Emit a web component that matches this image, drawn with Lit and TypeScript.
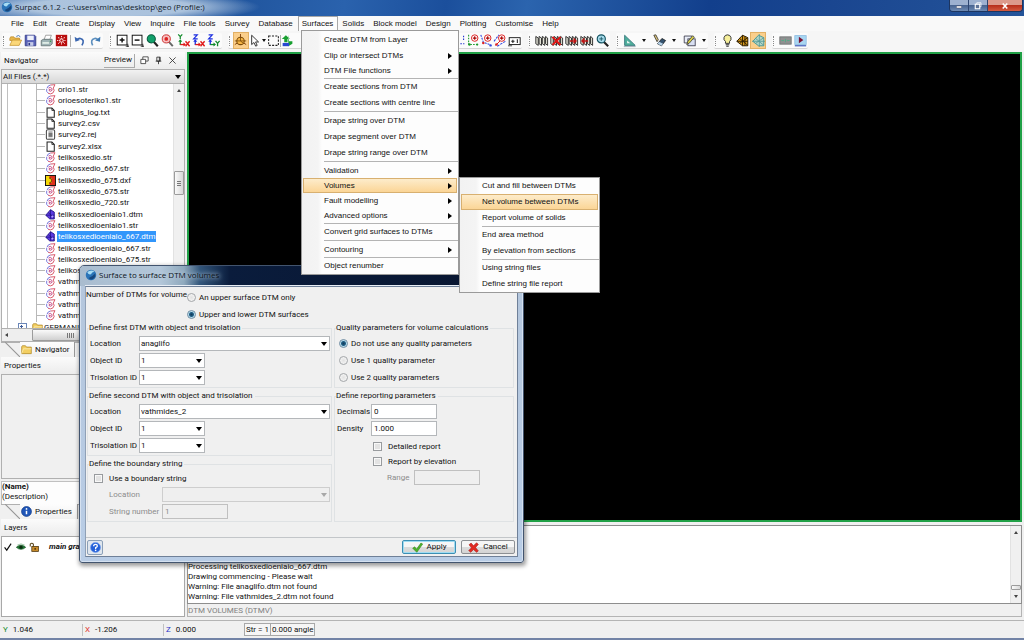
import { LitElement, html, css, svg, nothing } from "lit";
import { customElement, property } from "lit/decorators.js";
import { classMap } from "lit/directives/class-map.js";

const axes = (v: string, vc: string, h: string, hc: string) => svg`
  <g fill="none" stroke-width="1.6"><path d="M4 8V13.5" stroke=${vc}/><path d="M4 13H10" stroke=${hc}/></g>
  <path d="M1.5 9.5L4 6.5L6.5 9.5Z" fill=${vc}/><path d="M8 10.5L11 13L8 15.5Z" fill=${hc}/>
  ${v === "Y"
    ? svg`<path d="M1.5 0.5L4 3.2L6.5 0.5M4 3V6" stroke=${vc} stroke-width="1.5" fill="none"/>`
    : svg`<path d="M2 1H6.5L2 6H7" stroke=${vc} stroke-width="1.5" fill="none"/>`}
  ${h === "X"
    ? svg`<path d="M10.5 9L15.5 15M15.5 9L10.5 15" stroke=${hc} stroke-width="1.7" fill="none"/>`
    : svg`<path d="M10.5 8.5L13 11.5L15.5 8.5M13 11.5V15" stroke=${hc} stroke-width="1.6" fill="none"/>`}`;

const sections = svg`<g fill="#e4e4d8" stroke="#222" stroke-width="1.1">
  <path d="M1 3L4 5V14L1 12Z"/><path d="M5 3L8 5V14L5 12Z"/><path d="M9 3L12 5V14L9 12Z"/><path d="M13 3L15.5 5V14L13 12Z"/></g>`;

const plusPoint = svg`<circle cx="9.5" cy="5" r="4" fill="#fff" stroke="#d22" stroke-width="1.2"/>
  <path d="M9.5 2.8V7.2M7.3 5H11.7" stroke="#a00" stroke-width="1.4"/>`;

const ICONS: Record<string, unknown> = {
  open: svg`<path d="M1 5.5L2 3.5H6L7 5H13V8H1Z" fill="#e6b64c" stroke="#b8821c" stroke-width=".8"/><path d="M1 14L4 7.5H15.5L12.5 14Z" fill="#fbd779" stroke="#c08a20" stroke-width=".8"/><path d="M9 3Q12 .5 14 3.5" fill="none" stroke="#4a77b5" stroke-width="1.2"/>`,
  save: svg`<path d="M1.5 1.5H13L14.5 3V14.5H1.5Z" fill="#5a63b8" stroke="#2e3684"/><rect x="4" y="2" width="8" height="5.5" fill="#eef1fb"/><rect x="4.500" y="10" width="7" height="4.500" fill="#c5cbe8"/><rect x="5.500" y="11" width="2" height="3" fill="#2e3684"/>`,
  print: svg`<path d="M5 7L7 1.500H14L12 7Z" fill="#fff" stroke="#777" stroke-width=".8"/><path d="M1.500 8L4 6.500H15V12L12.500 14.500H1.500Z" fill="#9fb3b6" stroke="#566" stroke-width=".9"/><rect x="3" y="10" width="8" height="2" fill="#e8f4ec"/><circle cx="12.800" cy="9" r=".9" fill="#2a9d3d"/>`,
  burst: svg`<rect x="1" y="1" width="14" height="14" fill="#b80d0d"/><path d="M8 2.500V13.500M2.500 8H13.500M4 4L12 12M12 4L4 12" stroke="#ffd9d9" stroke-width="1.300" stroke-dasharray="1.600 1"/><circle cx="8" cy="8" r="1.800" fill="#b80d0d" stroke="#fff" stroke-width=".8"/>`,
  undo: svg`<path d="M11 14Q15 7 9 5.500Q6.500 5.200 5 7" fill="none" stroke="#3b67b0" stroke-width="2"/><path d="M2 3.500L3 9.500L8.500 7.500Z" fill="#3b67b0"/>`,
  redo: svg`<path d="M4.500 14Q1 7 7 5.500Q9.500 5.200 11 7" fill="none" stroke="#5d8fbe" stroke-width="2"/><path d="M14 3.500L13.500 9.500L7.500 8Z" fill="#3f7bb5"/>`,
  zoomin: svg`<rect x="1.500" y="1.500" width="12" height="12" fill="#fff" stroke="#111" stroke-width="1.200"/><path d="M7.500 4.500V10.500M4.500 7.500H10.500" stroke="#111" stroke-width="1.800"/><path d="M12 15H16M14.500 12V16" stroke="#111" stroke-width="1"/>`,
  zoomout: svg`<rect x="1.500" y="1.500" width="12" height="12" fill="#fff" stroke="#111" stroke-width="1.200"/><path d="M4.500 7.500H10.500" stroke="#111" stroke-width="1.800"/><path d="M12 15H16M14.500 12V16" stroke="#111" stroke-width="1"/>`,
  zoomall: svg`<path d="M9.500 9.500L14.500 15" stroke="#222" stroke-width="2.600"/><circle cx="6.500" cy="6" r="5" fill="#12a06a" stroke="#0c5c40" stroke-width="1.300"/>`,
  zoomsel: svg`<path d="M9.500 9.500L14.500 15" stroke="#666" stroke-width="2.400"/><circle cx="6.500" cy="6" r="5" fill="#f7c2c2" stroke="#c33" stroke-width="1.200"/><circle cx="6.500" cy="6" r="2.300" fill="#d22"/>`,
  yx: axes("Y", "#118a2a", "X", "#e01818"),
  zx: axes("Z", "#1c2ee0", "X", "#e01818"),
  zy: axes("Z", "#1c2ee0", "Y", "#118a2a"),
  orbit: svg`<path d="M8 0V4M1 13L5 10.500M15 13L11 10.500" stroke="#8a4a10" stroke-width="1.200"/><circle cx="8" cy="8.500" r="4.600" fill="#f6b545" stroke="#7a4a08" stroke-width="1.300"/><path d="M1 8.500H15M8 4V8.500L11.500 11.500" fill="none" stroke="#7a4a08" stroke-width="1"/>`,
  cursor: svg`<path d="M4.500 1.500V13L7.300 10.500L9.500 15L11.300 14L9.300 9.800H13Z" fill="#fff" stroke="#222" stroke-width="1.100"/>`,
  marquee: svg`<rect x="2" y="2.500" width="12" height="11.500" fill="none" stroke="#222" stroke-width="1.300" stroke-dasharray="2.500 1.600"/>`,
  shift: svg`<path d="M9 1V15L14 12V9H10ZM1 6L6 1.500L11 6H8V10H4V6Z" fill="#18a030"/><path d="M2 11H10V15H2Z" fill="#2848d0"/>`,
  dashes: svg`<path d="M13 2V8M9 12H14" stroke="#2a3bd0" stroke-width="1.400" stroke-dasharray="2 1.400"/>`,
  pt1: svg`<path d="M2 1V13H14" fill="none" stroke="#1c9a2c" stroke-width="1.300" stroke-dasharray="2 1.500"/>${plusPoint}<circle cx="3" cy="13" r="1.500" fill="#1c9a2c"/><circle cx="12.500" cy="13" r="1.400" fill="#1c9a2c"/>`,
  pt2: svg`<path d="M1 1L4 10L13 13.500" fill="none" stroke="#2f46e0" stroke-width="1.300" stroke-dasharray="2.500 1.300"/>${plusPoint}<circle cx="4" cy="11" r="1.500" fill="#d22"/><circle cx="13" cy="14" r="1.500" fill="#2f46e0"/>`,
  pt3: svg`<path d="M0 9L6 1M4 15L14 9" fill="none" stroke="#2f46e0" stroke-width="1.300" stroke-dasharray="3 1.300"/><path d="M2 14L9 7" stroke="#d22" stroke-width="1.200"/>${plusPoint}<circle cx="3" cy="13" r="1.600" fill="#d22"/>`,
  label: svg`<rect x="1.500" y="4.500" width="13.500" height="8.500" fill="#fff" stroke="#222" stroke-width="1.200"/><path d="M4 9H8M6 7V11M11.500 6.500V11" stroke="#222" stroke-width="1.300"/><path d="M0 14.500H5" stroke="#222"/>`,
  sec: sections,
  secx: svg`${sections}<path d="M3 3.500L13 13.500M13 3.500L3 13.500" stroke="#e01414" stroke-width="2.400"/>`,
  secr: svg`${sections}<path d="M6 8.500H13M10.500 5.500L13.500 8.500L10.500 11.500" stroke="#c01414" stroke-width="1.800" fill="none"/>`,
  secl: svg`${sections}<path d="M10 8.500H3M5.500 5.500L2.500 8.500L5.500 11.500" stroke="#c01414" stroke-width="1.800" fill="none"/>`,
  lens: svg`<path d="M9.500 9.500L15 15" stroke="#222" stroke-width="2.600"/><circle cx="6.500" cy="6" r="5" fill="#a8dcec" stroke="#12505e" stroke-width="1.400"/><path d="M4 6H9M6.500 3.500V8.500" stroke="#12505e"/>`,
  ruler: svg`<path d="M2 1.500V14H15Z" fill="#4fae9c" stroke="#2a6f74" stroke-width="1"/><path d="M5 8V11.500H9Z" fill="#e9f5f2"/><path d="M1 15.500H15.500" stroke="#789" stroke-width=".8"/>`,
  erase: svg`<path d="M1 1.500L3.500 1L6.500 7L5 9.500Z" fill="#d9c27a" stroke="#222" stroke-width=".9"/><path d="M5.500 12L11 5.500L15.500 8L10.500 14.500Z" fill="#34526e" stroke="#111" stroke-width=".9"/><path d="M5.500 12L7.500 9.600L12.500 12L10.500 14.500Z" fill="#b6d2e8"/>`,
  edit: svg`<path d="M1.500 2.500H11V11H1.500Z" fill="#e9edf7" stroke="#334" /><rect x="6" y="6" width="9" height="8.500" fill="#d8dff2" stroke="#334"/><path d="M4.500 13L6 9L12 2L14 4L8 11Z" fill="#d8cf4c" stroke="#333" stroke-width=".9"/>`,
  bulb: svg`<path d="M8 1A4.500 4.500 0 0 1 10.500 9.200V11.500H5.500V9.200A4.500 4.500 0 0 1 8 1Z" fill="#f6ef9a" stroke="#333" stroke-width="1.200"/><path d="M5.800 13.200H10.200M6.500 15H9.500" stroke="#333" stroke-width="1.300"/>`,
  mesh: svg`<path d="M8 1.500L14.500 4.500V14.500H8L1 9Z" fill="#d79a1c" stroke="#2b1c00" stroke-width="1.200"/><path d="M1 9H14.500M8 1.500V14.500M4.500 5.500L14.500 14M14.500 4.500L4.500 11.500M11 3V14.500" stroke="#2b1c00" stroke-width="1.100" fill="none"/>`,
  mesh2: svg`<path d="M8 1.500L14.500 4.500V14.500H8L1 9Z" fill="#b4d6c6" stroke="#4a9a98" stroke-width="1.200"/><path d="M0 9H16M9 0V16M4.500 5.500L14.500 14M14.500 4.500L4.500 11.500" stroke="#559a98" stroke-width="1" fill="none"/>`,
  plate: svg`<rect x="1" y="3.500" width="14" height="9" fill="#8f9191" stroke="#6e7070"/><path d="M3 8H6M8 6V10M10 8H13" stroke="#5a8" stroke-width="1.200"/>`,
  play: svg`<rect x="1" y="2" width="14" height="11" fill="#a9d6f2" stroke="#8bbbe0"/><path d="M6 3.500L11.500 7.500L6 11.500Z" fill="#7a1030"/><path d="M1 14.500H15" stroke="#3455b8" stroke-width="1.400"/>`,
  str: svg`<path d="M5 13.500Q1 11 2.500 7M3 6Q4 2 8 1.500" fill="none" stroke="#6a6ad8" stroke-width="1.300"/><path d="M8 1.500L14.500 1L12 6Q15 9 11.500 13Q8 15.500 4.500 13.500" fill="none" stroke="#d5485c" stroke-width="1.300"/><path d="M5 6Q8 3.500 10 6.500Q11.500 10 8 10.500Q5.500 10.500 6 8.200Q8 7 8.500 8.500" fill="none" stroke="#c0407c" stroke-width="1.300"/>`,
  file: svg`<path d="M3 1.500H10L13.500 5V15H3Z" fill="#fff" stroke="#222" stroke-width="1.500"/><path d="M10 1.500V5H13.500" fill="none" stroke="#222" stroke-width="1.200"/>`,
  rej: svg`<rect x="2" y="1" width="12" height="14" rx="2" fill="#fff" stroke="#444" stroke-width="1.500"/><rect x="5" y="5" width="6" height="6.500" fill="#777"/><path d="M5 3.500H11M5 13.200H11" stroke="#999"/>`,
  dxf: svg`<rect x=".7" y=".7" width="14.600" height="14.600" fill="#f5d90a" stroke="#111" stroke-width="1.400"/><path d="M6.500 1.400H14.600V14.600H6.500V11.500H10V4.500H6.500Z" fill="#e0301c"/><path d="M6 4.500H8.500Q10.500 8 8.500 11.500H6" fill="none" stroke="#5a1008" stroke-width="1.300"/>`,
  dtm: svg`<path d="M8 1L13.500 4.500V14.500H7L1 9Z" fill="#5b3ae0" stroke="#1d0f80" stroke-width="1.200"/><path d="M1 9H13.500M8 1V14M4.500 5L13.500 13" stroke="#1d0f80" fill="none"/><circle cx="10.800" cy="11" r="1.500" fill="#b9a4ff"/>`,
  folder: svg`<path d="M1 4L2 2.500H6.500L8 4.500H15V14H1Z" fill="#f3cf62" stroke="#a9801c"/><path d="M1 14L3.500 7H15" fill="none" stroke="#fff3c2"/>`,
  globe: svg`<circle cx="8" cy="8" r="7" fill="#2b74b8"/><path d="M3 4Q8 0 12.500 3.500Q9 4 8 7Q4 8 3 4Z" fill="#a6dcf4"/><path d="M5 12Q10 10 13.500 6Q15 12 9 14Q6.500 14 5 12Z" fill="#17477e"/>`,
  info: svg`<circle cx="8" cy="8" r="7.200" fill="#1f56b8" stroke="#123a85"/><path d="M8 7V12" stroke="#fff" stroke-width="2.200"/><circle cx="8" cy="4.300" r="1.300" fill="#fff"/>`,
  check: svg`<path d="M2.500 8.500L6 13L13 2.500" fill="none" stroke="#111" stroke-width="1.900"/>`,
  eye: svg`<path d="M.5 8.500Q8 1.500 15.500 8.500Q8 15 .5 8.500Z" fill="#1f7a34" stroke="#0e4a1c"/><circle cx="8" cy="8.300" r="2.600" fill="#0a2c10"/><path d="M2 5Q8 1 14 5" stroke="#6ba878" fill="none"/>`,
  lock: svg`<path d="M2 7V3.500Q4.500 .5 7 3.500V7" fill="none" stroke="#5c4a20" stroke-width="1.700"/><rect x="4.500" y="7" width="10.500" height="8" fill="#c68a2a" stroke="#4a3208" stroke-width="1.200"/><path d="M9.800 9.500V12.500" stroke="#2a1a00" stroke-width="1.800"/>`,
  tick: svg`<path d="M1 9L4 7L6.500 10.500L13 1.500L15.500 3L7 15Z" fill="#4cb52c" stroke="#2b7d14" stroke-width=".8"/>`,
  cross: svg`<path d="M1.500 4L4.500 1.500L8 5.500L12.500 1L15 3.500L11 8L15 13L12.500 15L8 11L4 15L1 12.500L5 8.500Z" fill="#e22a22" stroke="#a31410" stroke-width=".8"/>`,
  help: svg`<circle cx="8" cy="8" r="7.300" fill="#2460d8" stroke="#7aa4ee" stroke-width="1"/><path d="M5.300 6.200Q5.300 3.500 8 3.500Q10.700 3.500 10.700 5.800Q10.700 7.300 8.200 8.300V10" fill="none" stroke="#fff" stroke-width="1.900"/><circle cx="8.200" cy="12.200" r="1.200" fill="#fff"/>`,
  float: svg`<path d="M5 1.500H14.500V9H5Z" fill="#fff" stroke="#222" stroke-width="1.300"/><path d="M1.500 6H10V13.500H1.500Z" fill="#fff" stroke="#222" stroke-width="1.300"/>`,
  pin: svg`<path d="M5 2H11V9H5ZM3 9.200H13M8 9V14.500M9.500 2V9" fill="none" stroke="#222" stroke-width="1.400"/>`,
  close: svg`<path d="M2.500 2.500L13.500 13.500M13.500 2.500L2.500 13.500" stroke="#333" stroke-width="1.500"/>`,
  min: svg`<rect x="3" y="8" width="10" height="4" rx="1" fill="#fff" stroke="#445" stroke-width=".8"/>`,
  max: svg`<path d="M5.500 1.500H14V9.500H5.500Z" fill="none" stroke="#fff" stroke-width="1.500"/><rect x="2.500" y="4.500" width="9" height="9" fill="#5d7398" stroke="#fff" stroke-width="2.200"/>`,
  wclose: svg`<path d="M3.500 3L12.500 13M12.500 3L3.500 13" stroke="#fff" stroke-width="3.200"/>`,
};

const icon = (name: string) =>
  html`<svg class="i" viewBox="0 0 16 16" aria-hidden="true">${ICONS[name]}</svg>`;

const base = css`
  * { box-sizing: border-box; }
  button, input, select, fieldset, legend, ul, p, h1, h2 { margin: 0; padding: 0; font: inherit; color: inherit; }
  button { background: none; border: 0; white-space: nowrap; }
  ul { list-style: none; }
  a { color: inherit; text-decoration: none; }
  .i { width: 12px; height: 12px; display: block; flex: none; overflow: visible; }
`;

type Item = { label: string; sub?: boolean; hot?: boolean } | null;

@customElement("popup-menu")
class PopupMenu extends LitElement {
  @property({ attribute: false }) items: Item[] = [];
  static styles = [base, css`
    :host { display: block; background: linear-gradient(90deg, #f2f2f2 0, #f4f4f4 16px, #fdfdfd 20px); border: 1px solid #9a9a9a; font: 8px/16px "Liberation Sans", Arial, sans-serif; color: #111; }
    button { display: flex; align-items: center; width: calc(100% - 2px); height: 16px; margin: 0 1px; padding: 0 4px 0 20px; border: 1px solid transparent; text-align: left; }
    button.sub { height: 15px; }
    span { flex: 1; }
    button.hot { background: linear-gradient(#fdeccb, #fbd596); border-color: #d8b070; }
    button.sub::after { content: ""; border: 3px solid transparent; border-left: 4px solid #000; border-right: 0; }
    hr { height: 1px; margin: 0 0 0 22px; border: 0; background: #b4b4b4; }
    hr.wide { margin-bottom: 1px; }
  `];
  render() {
    return html`${this.items.map((it, n) => it
      ? html`<button role="menuitem" class=${classMap({ sub: !!it.sub, hot: !!it.hot })}><span>${it.label}</span></button>`
      : html`<hr class=${classMap({ wide: this.hasAttribute("roomy") && !this.items[n - 1]?.sub })}>`)}`;
  }
}

@customElement("volumes-dialog")
class VolumesDialog extends LitElement {
  static styles = [base, css`
    :host { display: flex; flex-direction: column; padding: 0 5px 5px; border: 1px solid #42546e; border-radius: 5px 5px 3px 3px; background: linear-gradient(#b4c6dc, #b9cde6); box-shadow: 0 0 0 1px #d5e1f0 inset, 1px 2px 4px 1px rgba(0,0,0,.4); font: 8px/12px Roboto, sans-serif; color: #111; }
    header { margin: 0 -5px; height: 20px; padding: 0 5px 2px; display: flex; align-items: center; gap: 2px; border-radius: 4px 4px 0 0; background: linear-gradient(90deg, #a9bccf 0, #b5c8da 80px, #8fa9bd 104px, #32557a 120px, #0a1c3c 150px, #08152f 100%); }
    header h2 { font: 8px/12px "Open Sans", sans-serif; color: #0c1420; text-shadow: 0 0 4px #c9d8e8, 0 0 6px #a9bccf; }
    .body { flex: 1; background: #f0f0f0; border: 1px solid #6f8098; border-left-color: #8fa0b6; display: flex; flex-direction: column; box-shadow: 0 -1px 0 #e8eef6; }
    .top { display: flex; gap: 6px; height: 35px; }
    .top > span { width: 94px; padding-top: 2px; white-space: nowrap; }
    .choices { padding-top: 2px; }
    .cols { display: grid; grid-template-columns: 245px 1fr; gap: 2px; padding: 0 3px 0 1px; }
    .col { display: flex; flex-direction: column; gap: 2px; }
    fieldset { border: 1px solid #dfe2e4; padding: 1px; min-width: 0; }
    .grow { flex: 1; }
    legend { line-height: 12px; padding: 0 2px 0 0; }
    .row { display: flex; align-items: center; height: 17px; padding-left: 1px; }
    .row.tick { height: 15px; }
    .row.first { margin-top: 2px; }
    .col .row.rad { padding-left: 3px; }
    .k { width: 49px; flex: none; }
    .k.in { width: 72px; padding-left: 19px; }
    .k.s { width: 34px; }
    .k.r { width: 77px; padding-left: 50px; }
    .off { color: #8c8c8c; }
    .box { width: 66px; height: 15px; flex: none; border: 1px solid #b4b7ba; background: #fff; padding: 0 1px; appearance: none; border-radius: 0; }
    input.box { padding: 0 2px; }
    .off .box { background: #efefef; border-color: #c0c0c0; }
    .pick { position: relative; display: flex; }
    .pick.w { flex: 1; }
    .pick.w .box { width: 100%; }
    .pick::after { content: ""; position: absolute; right: 3px; top: 6px; border: 3px solid transparent; border-top: 4px solid #000; border-bottom: 0; pointer-events: none; }
    .off .pick::after { border-top-color: #a8a8a8; }
    input[type="radio"] { appearance: none; width: 9px; height: 9px; flex: none; border: 1px solid #a3a6a9; border-radius: 50%; background: radial-gradient(#e2e2e2, #fafafa); }
    input[type="radio"]:checked { border-color: #6f8da3; background: radial-gradient(circle, #143a58 0, #1f5f86 2px, #b8dcec 3px, #e8f4fa 5px); }
    input[type="checkbox"] { appearance: none; width: 9px; height: 9px; flex: none; border: 1px solid #989b9e; background: #e3e3e3; box-shadow: 0 0 0 1px #f8f8f8 inset; }
    label.opt { display: flex; align-items: center; gap: 3px; }
    label.chk { display: flex; align-items: center; gap: 6px; padding-left: 4px; }
    .wide { padding-left: 33px; }
    footer { margin-top: auto; height: 19px; border-top: 1px solid #c3c6c9; display: flex; align-items: center; gap: 5px; padding: 0 2px 0 1px; }
    footer button { height: 14px; width: 54px; display: flex; align-items: center; justify-content: center; gap: 4px; border: 1px solid #8d9094; border-radius: 2px; background: linear-gradient(#f6f6f6 50%, #dcdcdc 50%, #d4d4d4); }
    footer .i { width: 11px; height: 11px; }
    footer .help { width: 16px; height: 15px; margin-right: auto; border-color: #8ba0b8; background: #dfe6ee; }
    footer .ok { border-color: #3c8fb4; box-shadow: 0 0 0 1px #9fdcf2 inset; }
  `];

  private pick(id: string, value: string, cls = "", disabled = false) {
    return html`<span class="pick ${cls}"><select class="box" id=${id} ?disabled=${disabled}><option>${value}</option></select></span>`;
  }
  private surface(legend: string, key: string, value: string) {
    return html`<fieldset><legend>${legend}</legend>
      <div class="row"><label class="k" for="${key}-loc">Location</label>${this.pick(`${key}-loc`, value, "w")}</div>
      <div class="row"><label class="k" for="${key}-obj">Object ID</label>${this.pick(`${key}-obj`, "1")}</div>
      <div class="row"><label class="k" for="${key}-tri">Trisolation ID</label>${this.pick(`${key}-tri`, "1")}</div>
    </fieldset>`;
  }
  private radio(name: string, label: string, on = false) {
    return html`<div class="row rad"><label class="opt"><input type="radio" name=${name} ?checked=${on}>${label}</label></div>`;
  }
  render() {
    return html`
      <header>${icon("globe")}<h2>Surface to surface DTM volumes</h2></header>
      <div class="body">
        <div class="top"><span>Number of DTMs for volume</span>
          <div class="choices">${this.radio("n", "An upper surface DTM only")}${this.radio("n", "Upper and lower DTM surfaces", true)}</div>
        </div>
        <div class="cols">
          <div class="col">
            ${this.surface("Define first DTM with object and trisolation", "a", "anaglifo")}
            ${this.surface("Define second DTM with object and trisolation", "b", "vathmides_2")}
            <fieldset><legend>Define the boundary string</legend>
              <div class="row tick"><label class="chk"><input type="checkbox">Use a boundary string</label></div>
              <div class="row off"><label class="k in" for="s-loc">Location</label>${this.pick("s-loc", "", "w", true)}</div>
              <div class="row off"><label class="k in" for="s-num">String number</label><input class="box" id="s-num" value="1" disabled></div>
            </fieldset>
          </div>
          <div class="col">
            <fieldset><legend>Quality parameters for volume calculations</legend>
              ${this.radio("q", "Do not use any quality parameters", true)}
              ${this.radio("q", "Use 1 quality parameter")}
              ${this.radio("q", "Use 2 quality parameters")}
            </fieldset>
            <fieldset class="grow"><legend>Define reporting parameters</legend>
              <div class="row"><label class="k s" for="dec">Decimals</label><input class="box" id="dec" value="0"></div>
              <div class="row"><label class="k s" for="den">Density</label><input class="box" id="den" value="1.000"></div>
              <div class="row tick first wide"><label class="chk"><input type="checkbox">Detailed report</label></div>
              <div class="row tick wide"><label class="chk"><input type="checkbox">Report by elevation</label></div>
              <div class="row off"><label class="k r" for="rng">Range</label><input class="box" id="rng" disabled></div>
            </fieldset>
          </div>
        </div>
        <footer>
          <button class="help" aria-label="Help">${icon("help")}</button>
          <button class="ok">${icon("tick")}Apply</button>
          <button>${icon("cross")}Cancel</button>
        </footer>
      </div>`;
  }
}

const MENUS = ["File", "Edit", "Create", "Display", "View", "Inquire", "File tools", "Survey", "Database", "Surfaces", "Solids", "Block model", "Design", "Plotting", "Customise", "Help"];

const TOOLS: [string, string[]][] = [
  ["g1", ["open", "save", "print", "burst", "|", "undo", "redo"]],
  ["g2", ["zoomin", "zoomout", "zoomall", "zoomsel", "yx", "zx", "zy"]],
  ["g3", ["*orbit", "cursor", "v", "marquee", "|", "shift", "_", "dashes", "pt1", "pt2", "pt3", "label"]],
  ["g4", ["sec", "secx", "secr", "secl", "lens"]],
  ["g5", ["ruler", "v", "erase", "v", "edit", "v"]],
  ["g6", ["bulb", "mesh", "*mesh2"]],
  ["g7", ["plate", "play"]],
];

const FILES: [string, string][] = [
  ["str", "orio1.str"], ["str", "orioesoteriko1.str"], ["file", "plugins_log.txt"], ["file", "survey2.csv"],
  ["rej", "survey2.rej"], ["file", "survey2.xlsx"], ["str", "telikosxedio.str"], ["str", "telikosxedio_667.str"],
  ["dxf", "telikosxedio_675.dxf"], ["str", "telikosxedio_675.str"], ["str", "telikosxedio_720.str"],
  ["dtm", "telikosxedioeniaio1.dtm"], ["str", "telikosxedioeniaio1.str"], ["dtm", "telikosxedioeniaio_667.dtm"],
  ["str", "telikosxedioeniaio_667.str"], ["str", "telikosxedioeniaio_675.str"], ["str", "telikosxedioeniaio_720.str"],
  ["str", "vathmides.str"], ["str", "vathmides_1.str"], ["str", "vathmides_2.str"], ["str", "vathmides_3.str"],
];
const SELECTED = "telikosxedioeniaio_667.dtm";

const SURFACES: Item[] = [
  { label: "Create DTM from Layer" }, { label: "Clip or intersect DTMs", sub: true }, { label: "DTM File functions", sub: true }, null,
  { label: "Create sections from DTM" }, { label: "Create sections with centre line" }, null,
  { label: "Drape string over DTM" }, { label: "Drape segment over DTM" }, { label: "Drape string range over DTM" }, null,
  { label: "Validation", sub: true }, { label: "Volumes", sub: true, hot: true }, { label: "Fault modelling", sub: true }, { label: "Advanced options", sub: true }, null,
  { label: "Convert grid surfaces to DTMs" }, null, { label: "Contouring", sub: true }, null, { label: "Object renumber" },
];
const VOLUMES: Item[] = [
  { label: "Cut and fill between DTMs" }, { label: "Net volume between DTMs", hot: true }, { label: "Report volume of solids" }, null,
  { label: "End area method" }, { label: "By elevation from sections" }, null, { label: "Using string files" }, { label: "Define string file report" },
];

@customElement("app-root")
class AppRoot extends LitElement {
  static styles = [base, css`
    :host { position: relative; display: flex; flex-direction: column; height: 100vh; overflow: hidden; background: #f0f0f0; font: 8px/12px Roboto, sans-serif; color: #111; }
    .title { height: 16px; flex: none; display: flex; align-items: flex-start; gap: 2px; padding-left: 1px; background: radial-gradient(ellipse 150px 16px at 110px 7px, rgba(178,200,224,.95) 55%, rgba(178,200,224,0) 100%), linear-gradient(100deg, #4b78b4 0, #21569f 240px, #2a62ad 340px, #1b4f9c 440px, #2b64ae 520px, #123f8c 700px, #1a4690 820px, #24549a 100%); }
    .title h1 { flex: 1; font: 8px/14px "Open Sans", sans-serif; color: #111a28; }
    .title > .i { margin-top: 1px; }
    .wb { display: flex; height: 12px; margin-right: 1px; border: 1px solid #1c3560; border-top: 0; border-radius: 0 0 4px 4px; overflow: hidden; }
    .wb button { width: 19px; display: grid; place-items: center; background: linear-gradient(#9db1d0 45%, #496591 50%, #6d8ab4); border-right: 1px solid #2c4570; }
    .wb button:last-child { width: 34px; border: 0; background: linear-gradient(#dc9a8c 45%, #b8301c 50%, #d25a40); }
    .wb .i { width: 8px; height: 8px; }
    .menus { height: 15px; flex: none; display: flex; padding-left: 7px; background: #f9f9f9; font: 8px/14px "Liberation Sans", Arial, sans-serif; }
    .menus button { padding: 0 4px 0 3px; border: 1px solid transparent; border-bottom: 0; }
    .menus button.open { background: #fdfdfd; border-color: #a8a8a8; }
    .tools { height: 21px; flex: none; display: flex; gap: 6px; padding: 2px 0 3px 2px; background: #f6f6f6; }
    .tg { display: flex; align-items: center; justify-content: space-between; padding: 0 1px 0 6px; background: #fbfbfb; border-bottom: 1px solid #d5d5d5; border-radius: 2px; position: relative; }
    .tg::before { content: ""; position: absolute; left: 1px; top: 3px; bottom: 2px; border-left: 1px dotted #8a8a8a; }
    .g1 { width: 101px; } .g2 { width: 113px; } .g3 { width: 294px; } .g4 { width: 82px; } .g5 { width: 92px; } .g6 { width: 52px; } .g7 { width: 36px; }
    .tb { width: 14px; height: 15px; display: grid; place-items: center; }
    .tb .i { width: 13px; height: 13px; }
    .tb.on { background: #fbcf8b; outline: 1px solid #e2b064; }
    .bar { width: 1px; height: 12px; background: #b0b0b0; }
    .drop { width: 5px; height: 8px; display: grid; place-items: center; }
    .drop::after { content: ""; border: 2px solid transparent; border-top: 3px solid #111; border-bottom: 0; }
    .gap { flex: 0 0 158px; }
    .main { flex: 1; min-height: 0; display: grid; grid-template-columns: 184px 1fr; gap: 2px; padding: 0 2px 3px 1px; }
    .left { display: grid; grid-template-rows: 306fr 162fr 98fr; min-height: 0; }
    .left section { display: flex; flex-direction: column; min-height: 0; }
    .head { height: 17px; flex: none; display: flex; align-items: center; gap: 5px; padding: 0 8px 0 3px; background: linear-gradient(#fbfbfb, #ececec); }
    .head h2 { flex: 1; font-weight: 400; }
    .head .i { width: 9px; height: 9px; }
    .head .pv { border-right: 1px solid #aaa; border-bottom: 1px solid #aaa; padding: 0 2px 1px 0; }
    .filter { position: relative; flex: none; display: flex; }
    .filter select { appearance: none; width: 100%; height: 15px; border: 1px solid #b0b0b0; border-radius: 0; background: linear-gradient(#f2f2f2, #d8d8d8); padding: 0 1px; }
    .filter::after { content: ""; position: absolute; right: 4px; top: 6px; border: 3px solid transparent; border-top: 4px solid #000; border-bottom: 0; }
    .tree { flex: 1; min-height: 0; display: flex; background: #fff; border: 1px solid #b0b0b0; border-width: 0 1px; overflow: hidden; }
    .list { flex: 1; height: calc(100% + 5px); display: flex; flex-direction: column; background: linear-gradient(#c0c0c0, #c0c0c0) 5px 0 / 1px 100% no-repeat, linear-gradient(#c0c0c0, #c0c0c0) 19px 0 / 1px 100% no-repeat; }
    .list li { flex: 1; display: flex; align-items: center; margin-left: 34px; border-left: 1px solid #b8b8b8; white-space: nowrap; }
    .list li::before { content: ""; width: 8px; border-top: 1px solid #b8b8b8; }
    .list li.dir { margin-left: 16px; border: 0; }
    .list li.dir::before { width: 7px; height: 7px; border: 1px solid #6a86b8; background: linear-gradient(#3a5a98, #3a5a98) 1px 2px / 3px 1px no-repeat, linear-gradient(#3a5a98, #3a5a98) 2px 1px / 1px 3px no-repeat #fff; }
    .list .dir .i { margin: 0 1px 0 5px; }
    .list .i { width: 11px; height: 11px; }
    .list a { margin-left: 1px; padding: 0 1px; line-height: 11px; }
    .list a.sel { background: #3296fb; color: #fff; }
    .vs { width: 11px; flex: none; background: #f0f0f0; display: flex; flex-direction: column; align-items: center; border-left: 1px solid #e2e2e2; }
    .up, .dn { flex: none; height: 12px; display: grid; place-items: center; }
    .up::after { content: ""; border: 2px solid transparent; border-bottom: 3px solid #444; border-top: 0; }
    .dn::after { content: ""; border: 2px solid transparent; border-top: 3px solid #444; border-bottom: 0; }
    .th { width: 10px; border: 1px solid #9c9c9c; border-radius: 1px; background: linear-gradient(90deg, #fafafa, #d8d8d8); display: grid; place-items: center; }
    .th::after { content: ""; width: 4px; height: 5px; background: repeating-linear-gradient(#777 0 1px, transparent 1px 2px); }
    .vs.nav::before { content: ""; order: 1; flex: 1; max-height: 75px; }
    .vs.nav .th { order: 2; height: 24px; }
    .hs { height: 14px; flex: none; display: flex; align-items: center; background: #eee; border: 1px solid #b0b0b0; padding-left: 3px; }
    .hs::before { content: ""; border: 2px solid transparent; border-right: 3px solid #444; border-left: 0; }
    .hs .th { margin-left: 24px; width: 76px; height: 12px; background: linear-gradient(#fafafa, #d0d0d0); }
    .hs .th::after { width: 7px; background: repeating-linear-gradient(90deg, #777 0 1px, transparent 1px 2px); }
    .tabs { height: 15px; flex: none; display: flex; padding-left: 4px; background: linear-gradient(#b0b0b0 0 1px, #f0f0f0 1px); }
    .tab { display: flex; align-items: center; gap: 3px; padding: 0 5px 0 16px; background: linear-gradient(to bottom left, transparent calc(50% - 1px), #999 50%, transparent calc(50% + 1px)) 0 0 / 15px 100% no-repeat, linear-gradient(#fdfdfd, #f0f0f0) 15px 0 no-repeat; border-right: 1px solid #999; }
    .tab .i { width: 11px; height: 11px; }
    .well { flex: 1; border: 1px solid #b0b0b0; background: #f0f0f0; margin-bottom: 2px; }
    .desc { flex: none; background: #fdfdfd; border: 1px solid #c0c0c0; border-bottom: 0; line-height: 10px; padding: 0 0 2px; }
    .layers { flex: 1; background: #fff; border: 1px solid #a8a8a8; padding: 4px 1px; }
    .lay { display: flex; align-items: center; gap: 3px; }
    .lay .i { width: 10px; height: 10px; }
    .lay b { margin-left: 7px; font-style: italic; white-space: nowrap; }
    .right { display: flex; flex-direction: column; min-width: 0; min-height: 0; }
    .view { flex: 1; background: #000; border: 2px solid #20a046; }
    .log { height: 79px; flex: none; margin-top: 3px; display: flex; border: 1px solid #8e8e8e; background: #fff; line-height: 10px; }
    .log div { flex: 1; align-self: flex-end; padding-bottom: 1px; }
    .log .vs { flex: none; align-self: stretch; width: 11px; }
    .log .vs i { flex: 1; }
    .log .th { height: 5px; } .log .th::after { display: none; }
    .cmd { height: 13px; flex: none; border: 1px solid #b4b4b4; border-top: 0; background: #f0f0f0; }
    .cmd::placeholder { color: #808080; opacity: 1; }
    .status { height: 20px; flex: none; display: flex; align-items: center; padding-left: 3px; background: #f0f0f0; border-top: 1px solid #b4b4b4; border-bottom: 2px solid #7283a6; }
    .st { width: 81px; display: flex; gap: 5px; }
    .st:first-child { width: 79px; }
    .st + .st { border-left: 1px solid #c0c0c0; padding-left: 2px; }
    .y { color: #1a8a2a; } .x { color: #e03030; } .z { color: #2a32c8; }
    .cell { border: 1px solid #a8a8a8; padding: 0 1px; background: #f6f6f6; line-height: 11px; }
    .cell + .cell { border-left: 0; }
    .menu1, .menu2, .dlg { position: absolute; }
    .menu1 { left: 301px; top: 30px; width: 158px; padding-top: 1px; }
    .menu2 { left: 459px; top: 177px; width: 141px; }
    .dlg { left: 79px; top: 265px; width: 445px; height: 298px; }
  `];

  private tool(t: string) {
    if (t === "|") return html`<span class="bar"></span>`;
    if (t === "_") return html`<span class="gap"></span>`;
    if (t === "v") return html`<button class="drop" aria-label="More"></button>`;
    const on = t[0] === "*";
    const name = on ? t.slice(1) : t;
    return html`<button class=${classMap({ tb: true, on })} aria-label=${name}>${icon(name)}</button>`;
  }

  render() {
    return html`
      <header class="title">${icon("globe")}<h1>Surpac 6.1.2 - c:\\users\\minas\\desktop\\geo (Profile:)</h1>
        <div class="wb"><button aria-label="Minimise">${icon("min")}</button><button aria-label="Restore">${icon("max")}</button><button aria-label="Close">${icon("wclose")}</button></div>
      </header>
      <nav class="menus">${MENUS.map((m) => html`<button class=${m === "Surfaces" ? "open" : nothing}>${m}</button>`)}</nav>
      <div class="tools">${TOOLS.map(([g, ts]) => html`<div class="tg ${g}">${ts.map((t) => this.tool(t))}</div>`)}</div>
      <div class="main">
        <aside class="left">
          <section>
            <div class="head"><h2>Navigator</h2><button class="pv">Preview</button><button aria-label="Float">${icon("float")}</button><button aria-label="Pin">${icon("pin")}</button><button aria-label="Close">${icon("close")}</button></div>
            <div class="filter"><select aria-label="File filter"><option>All Files (.*.*)</option></select></div>
            <div class="tree">
              <ul class="list">
                ${FILES.map(([k, f]) => html`<li>${icon(k)}<a href="#" class=${f === SELECTED ? "sel" : nothing}>${f}</a></li>`)}
                <li class="dir">${icon("folder")}GERMANIA</li>
              </ul>
              <div class="vs nav"><span class="up"></span><span class="th"></span></div>
            </div>
            <div class="hs"><span class="th"></span></div>
            <div class="tabs"><button class="tab">${icon("folder")}Navigator</button></div>
          </section>
          <section>
            <div class="head"><h2>Properties</h2></div>
            <div class="well"></div>
            <div class="desc"><b>(Name)</b><br>(Description)</div>
            <div class="tabs"><button class="tab">${icon("info")}Properties</button></div>
          </section>
          <section>
            <div class="head"><h2>Layers</h2></div>
            <div class="layers"><div class="lay">${icon("check")}${icon("eye")}${icon("lock")}<b>main graphics layer</b></div></div>
          </section>
        </aside>
        <main class="right">
          <div class="view"></div>
          <div class="log"><div>Processing telikosxedioeniaio_667.dtm<br>Drawing commencing - Please wait<br>Warning: File anaglifo.dtm not found<br>Warning: File vathmides_2.dtm not found</div>
            <div class="vs"><span class="up"></span><i></i><span class="th"></span><span class="dn"></span></div></div>
          <input class="cmd" aria-label="Command" placeholder="DTM VOLUMES (DTMV)">
        </main>
      </div>
      <footer class="status">
        <span class="st"><span class="y">Y</span>1.046</span><span class="st"><span class="x">X</span>-1.206</span><span class="st"><span class="z">Z</span>0.000</span>
        <span class="cell">Str = 1</span><span class="cell">0.000 angle</span>
      </footer>
      <volumes-dialog class="dlg"></volumes-dialog>
      <popup-menu class="menu1" roomy .items=${SURFACES}></popup-menu>
      <popup-menu class="menu2" .items=${VOLUMES}></popup-menu>`;
  }
}
